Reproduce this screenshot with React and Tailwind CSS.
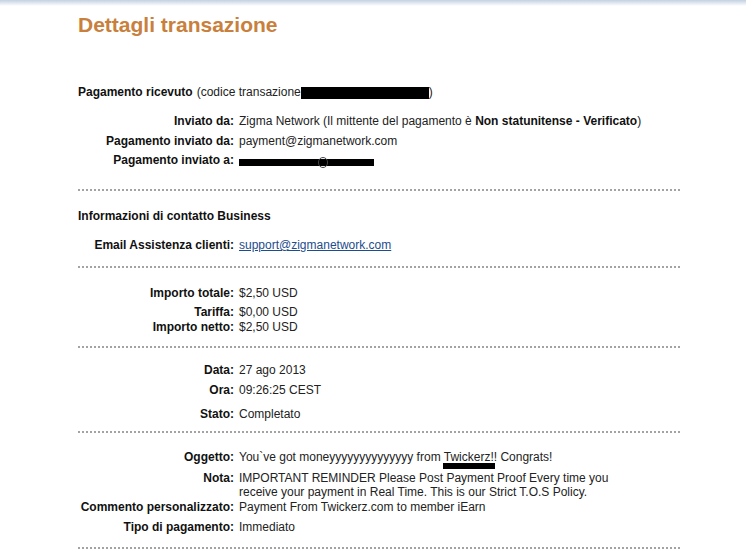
const Dotted = ({ className = '' }) => (
  <div
    className={`h-[2px] w-[602px] bg-[linear-gradient(to_right,#a3a3a3_50%,transparent_50%)] bg-[length:4px_2px] ${className}`}
  />
);

const Row = ({ label, children, className = '' }) => (
  <div className={`flex leading-[15px] ${className}`}>
    <div className="w-[156px] shrink-0 text-right font-bold text-[#111]">{label}</div>
    <div className="ml-[5px] text-[#222]">{children}</div>
  </div>
);

export default function App() {
  return (
    <div className="h-[549px] w-full overflow-hidden bg-white text-[12px] font-['Liberation_Sans',Arial,sans-serif] text-[#111]">
      <div className="h-[6px] bg-linear-to-b from-[#c3d1e2] to-white" />
      <div className="pl-[78px]">
        <h1 className="mt-[7px] text-[21px] leading-[24px] font-bold text-[#c8803c]">
          Dettagli transazione
        </h1>

        <div className="mt-[48px] flex items-center leading-[15px]">
          <span className="font-bold">Pagamento ricevuto</span>
          <span className="ml-[4px] text-[#222]">(codice transazione</span>
          <span className="inline-block h-[12px] w-[128px] bg-black" />
          <span className="text-[#222]">)</span>
        </div>

        <Row label="Inviato da:" className="mt-[14px]">
          Zigma Network (Il mittente del pagamento è{' '}
          <span className="font-bold text-[#111]">Non statunitense - Verificato</span>)
        </Row>
        <Row label="Pagamento inviato da:" className="mt-[5px]">
          payment@zigmanetwork.com
        </Row>
        <Row label="Pagamento inviato a:" className="mt-[4px]">
          <div className="relative mt-[6px] h-[7px] w-[135px] bg-black">
            <span className="absolute left-[79px] top-[-2px] h-[11px] w-[10px] rounded-full border border-[#444]" />
          </div>
        </Row>

        <Dotted className="mt-[21px]" />

        <div className="mt-[18px] leading-[15px] font-bold">Informazioni di contatto Business</div>
        <Row label="Email Assistenza clienti:" className="mt-[14px]">
          <span className="text-[#1d4d8c] underline">support@zigmanetwork.com</span>
        </Row>

        <Dotted className="mt-[13px]" />

        <Row label="Importo totale:" className="mt-[18px]">$2,50 USD</Row>
        <Row label="Tariffa:" className="mt-[4px]">$0,00 USD</Row>
        <Row label="Importo netto:">$2,50 USD</Row>

        <Dotted className="mt-[11px]" />

        <Row label="Data:" className="mt-[15px]">27 ago 2013</Row>
        <Row label="Ora:" className="mt-[5px]">09:26:25 CEST</Row>
        <Row label="Stato:" className="mt-[9px]">Completato</Row>

        <Dotted className="mt-[9px]" />

        <Row label="Oggetto:" className="mt-[17px]">
          <span className="relative">
            You`ve got moneyyyyyyyyyyyyyy from{' '}
            <span className="relative">
              Twickerz
              <span className="absolute left-[-1px] top-[13px] h-[6px] w-[52px] bg-black" />
            </span>
            !! Congrats!
          </span>
        </Row>
        <Row label="Nota:" className="mt-[6px]">
          <div className="leading-[14px]">
            IMPORTANT REMINDER Please Post Payment Proof Every time you
            <br />
            receive your payment in Real Time. This is our Strict T.O.S Policy.
          </div>
        </Row>
        <Row label="Commento personalizzato:" className="mt-[1px]">
          Payment From Twickerz.com to member iEarn
        </Row>
        <Row label="Tipo di pagamento:" className="mt-[5px]">Immediato</Row>

        <Dotted className="mt-[12px]" />
      </div>
    </div>
  );
}
